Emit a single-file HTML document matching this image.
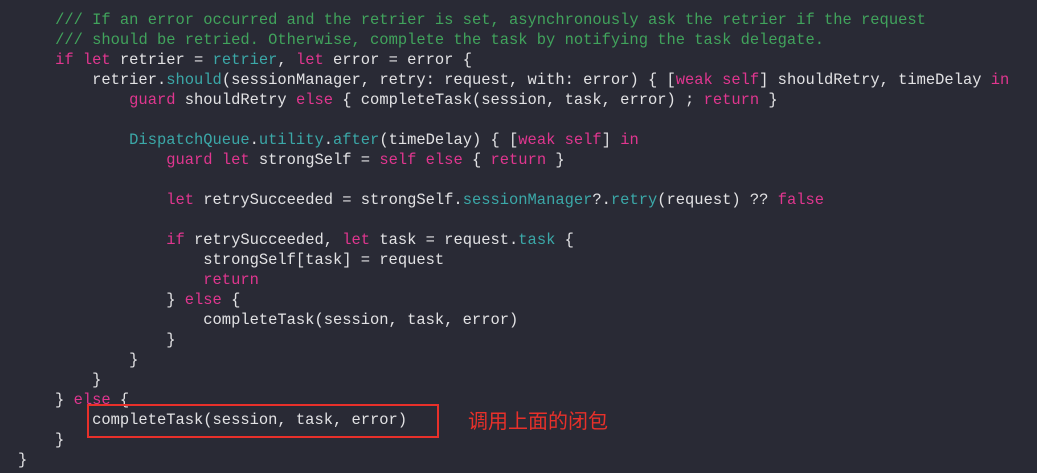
<!DOCTYPE html>
<html><head><meta charset="utf-8"><style>
html,body{margin:0;padding:0;background:#292a35;width:1037px;height:473px;overflow:hidden}
pre{margin:0;position:absolute;left:18px;top:10px;font-family:"Liberation Mono",monospace;font-size:15.45px;line-height:20px;color:#e2e2e4}
.c{color:#41a35c}.k{color:#e0368f}.m{color:#3ba8a8}
.box{position:absolute;left:87px;top:404px;width:348px;height:30px;border:2px solid #e8302a}
.note{position:absolute;left:468px;top:407px;font-family:"Noto Sans CJK SC",sans-serif;font-size:20px;line-height:26px;color:#e8302a}
</style></head><body>
<pre>    <span class="c">/// If an error occurred and the retrier is set, asynchronously ask the retrier if the request</span>
    <span class="c">/// should be retried. Otherwise, complete the task by notifying the task delegate.</span>
    <span class="k">if let</span> retrier = <span class="m">retrier</span>, <span class="k">let</span> error = error {
        retrier.<span class="m">should</span>(sessionManager, retry: request, with: error) { [<span class="k">weak self</span>] shouldRetry, timeDelay <span class="k">in</span>
            <span class="k">guard</span> shouldRetry <span class="k">else</span> { completeTask(session, task, error) ; <span class="k">return</span> }

            <span class="m">DispatchQueue</span>.<span class="m">utility</span>.<span class="m">after</span>(timeDelay) { [<span class="k">weak self</span>] <span class="k">in</span>
                <span class="k">guard let</span> strongSelf = <span class="k">self</span> <span class="k">else</span> { <span class="k">return</span> }

                <span class="k">let</span> retrySucceeded = strongSelf.<span class="m">sessionManager</span>?.<span class="m">retry</span>(request) ?? <span class="k">false</span>

                <span class="k">if</span> retrySucceeded, <span class="k">let</span> task = request.<span class="m">task</span> {
                    strongSelf[task] = request
                    <span class="k">return</span>
                } <span class="k">else</span> {
                    completeTask(session, task, error)
                }
            }
        }
    } <span class="k">else</span> {
        completeTask(session, task, error)
    }
}</pre>
<div class="box"></div>
<div class="note">调用上面的闭包</div>
</body></html>
